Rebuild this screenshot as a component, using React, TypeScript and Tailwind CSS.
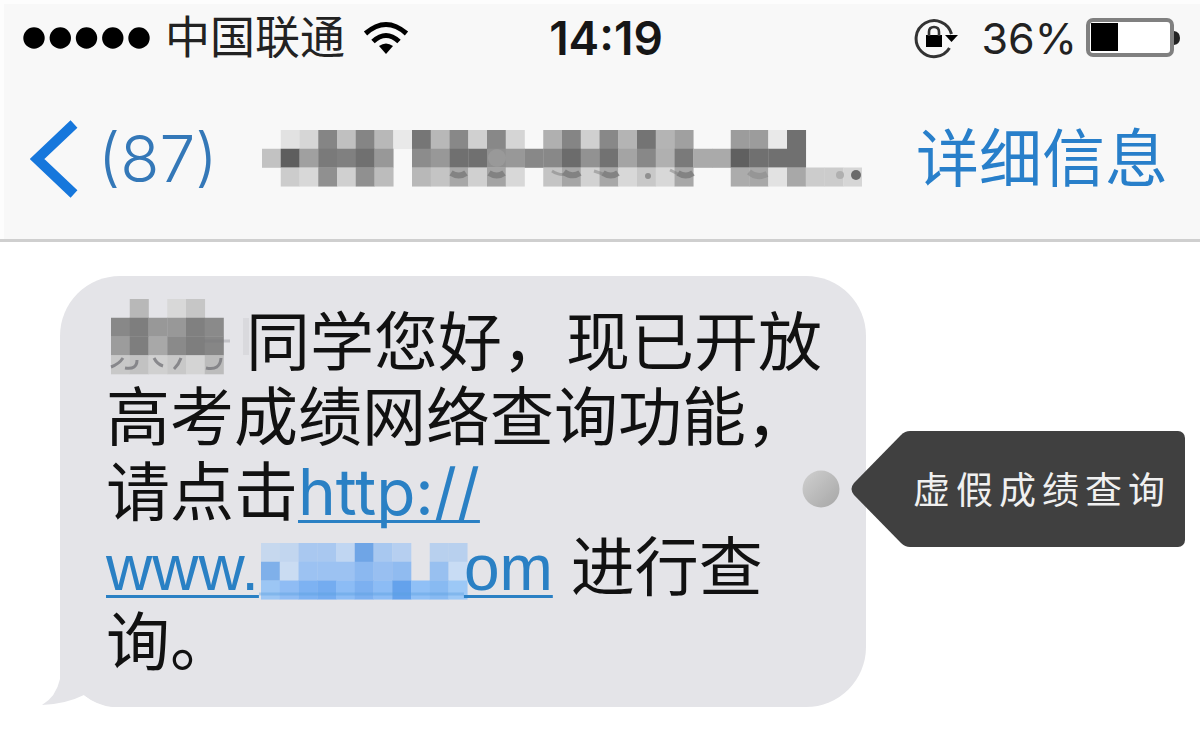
const TITLE_ROWS: string[] = [
  '. e2 d6 85 c0 85 b8 e9 76 b8 88 d0 88 d5 . b0 85 d0 88 b4 74 b4 a0 . . 9c 9c e9 70 . . .',
  'c2 5e a0 7a 80 70 98 . 8c 98 70 70 90 98 88 88 6c 92 72 a4 88 b0 7a aa aa 60 70 70 70 . . .',
  '. cc d8 90 d0 90 bc . b8 c4 a8 d0 a4 d8 . c4 a6 d2 a8 d8 c8 d8 a8 . . ac a8 e2 a8 cc cc d6',
];

const NAME_ROWS: string[] = [
  '. b8 . d8 c6 .',
  '88 7e 98 98 80 8a',
  '9c 7e a8 8a 7e 86',
  'c8 c2 d0 c8 d4 bc',
];

const LINK_ROWS: string[][] = [
  ['#c6d8ee', '#c2d6ef', '#a9c8f0', '#a9c8f0', '#c0d6f2', '#6fa5e6', '#a8c8f0', '#b6cff0', '', '#b8d0ee', '#b8d0ee'],
  ['#7fb0ea', '#cadcf2', '#9cc2f2', '#9cc2f2', '#9cc2f2', '#8bb8f0', '#98bff1', '#90bbf0', '', '#98c0f0', '#c8dcf4'],
  ['#9cc6f4', '#8fbcf4', '#7db2f2', '#74acf0', '#8cbcf5', '#7cb0f0', '#8cbcf5', '#64a2ec', '#90c0f6', '#88baf2', '#9cc8f6'],
];

const CELL = 75 / 4;

function cells(rows: string[]) {
  return rows.flatMap((row, y) =>
    row.split(' ').map((v, x) =>
      v === '.' ? null : (
        <rect key={`${x}-${y}`} x={x * CELL} y={y * CELL} width={CELL + 0.3} height={CELL + 0.3} fill={`#${v}${v}${v}`} />
      ),
    ),
  );
}

function TitleMosaic() {
  return (
    <svg width="600" height="57" viewBox="0 0 600 57" aria-label="contact" className="min-w-0">
      {cells(TITLE_ROWS)}
      <g fill="none" stroke="#777" strokeWidth="6" opacity=".75">
        <path d="M189 43q8 5 15 0M227 43q8 5 15 0M302 42q8 6 16 1M341 43q8 5 15 0M416 43q8 5 15 0" />
        <path d="M487 42q8 7 18 2" opacity=".5" />
        <path d="M290 41q8 5 14 3M332 41l12 4M408 40l10 5" strokeWidth="3" opacity=".6" />
      </g>
      <circle cx="235" cy="28" r="9" fill="#999" />
      <circle cx="386" cy="46" r="3" fill="#909090" />
      <circle cx="578" cy="45" r="4" fill="#b0b0b0" />
      <circle cx="594" cy="45" r="5" fill="#6a6a6a" />
    </svg>
  );
}

function NameMosaic() {
  return (
    <svg width="140" height="75" viewBox="0 0 140 75" aria-label="name" className="inline-block overflow-visible align-top">
      <rect x="137" y="14" width="6" height="37" fill="#d9d9dd" />
      <g transform="translate(5 -5)">{cells(NAME_ROWS)}</g>
      <g fill="none" stroke="#77777c" strokeWidth="3" opacity=".8">
        <path d="M5 63q8-3 12-9M19 64q12 2 12-8M48 54q3 6 9 8M68 65q5-5 7-11M100 64q14 3 15-10" />
      </g>
      <path d="M98 37h26" stroke="#77777c" strokeWidth="3" opacity=".3" />
    </svg>
  );
}

function LinkMosaic() {
  return (
    <svg width="205" height="75" viewBox="0 0 205 75" aria-label="domain" className="inline-block overflow-visible align-top">
      {LINK_ROWS.flatMap((row, y) =>
        row.map((fill, x) =>
          fill ? <rect key={`${x}-${y}`} x={2 + x * CELL} y={14 + y * CELL} width={CELL + 0.3} height={CELL + 0.3} fill={fill} /> : null,
        ),
      )}
      <path d="M0 65h205" stroke="#5aa0e0" strokeWidth="3" opacity=".4" />
    </svg>
  );
}

function StatusBar() {
  return (
    <div className="grid grid-cols-[1fr_auto_1fr] items-center pt-1 text-black">
      <div className="flex items-center pl-[23px]">
        <svg width="128" height="24" viewBox="0 0 128 24" aria-label="signal">
          {[11, 37.3, 63.5, 89.8, 116].map((x) => (
            <circle key={x} cx={x} cy="12" r="10.7" />
          ))}
        </svg>
        <span className="ml-[14px] text-[45px] leading-[68px] text-[#222]">中国联通</span>
        <svg width="46" height="36" viewBox="0 0 46 36" className="ml-[18px]" aria-label="Wi-Fi">
          <path d="M2.500 13.500Q23-4.500 43.500 13.500M10 21.500Q23 9.500 36 21.500" fill="none" stroke="#000" strokeWidth="5" />
          <path d="M16 26q7-5 14 0l-7 8z" />
        </svg>
      </div>
      <time className="pl-3 text-[46px] font-semibold leading-[68px] text-[#161616]">14:19</time>
      <div className="flex items-center justify-end pr-[20px]">
        <svg width="46" height="42" viewBox="0 0 46 42" aria-label="rotation lock">
          <path d="M35.500 31A18 18 0 1 1 37.500 17" fill="none" stroke="#333" strokeWidth="3" />
          <path d="M31 18h13l-6.500 7z" />
          <path d="M12 18h16v12H12z" />
          <path d="M15 19v-4q0-5 5-5t5 5v4" fill="none" stroke="#333" strokeWidth="2.600" />
        </svg>
        <span className="ml-[22px] text-[43px] leading-[68px] text-[#222]">36%</span>
        <svg width="94" height="40" viewBox="0 0 94 40" className="ml-[9px]" aria-label="battery">
          <rect x="2" y="2" width="84" height="35" rx="5" fill="#fff" stroke="#808080" strokeWidth="4" />
          <path d="M5 5h27v28H5z" />
          <path d="M88 13q6 1 6 7t-6 7z" fill="#222" />
        </svg>
      </div>
    </div>
  );
}

export default function App() {
  return (
    <div className="relative min-h-screen bg-white font-[Inter,'Noto_Sans_CJK_SC',sans-serif]">
      <header className="border-b-[3px] border-[#cfcfcf] bg-[#f8f8f8] shadow-[inset_4px_4px_0_#fdfdfd]">
        <StatusBar />
        <nav className="flex h-[167px] items-center pl-[30px] pr-[32px] pt-[6px]">
          <button type="button" className="flex items-center text-[#3478b8]">
            <svg width="48" height="78" viewBox="0 0 48 78" aria-hidden="true">
              <path d="M44 4L7 39l37 35" fill="none" stroke="#1677dc" strokeWidth="10" />
            </svg>
            <span className="ml-[20px] text-[64px] font-light leading-[75px]">(87)</span>
          </button>
          <h1 className="ml-auto mr-[10px]">
            <TitleMosaic />
          </h1>
          <button type="button" className="ml-auto whitespace-nowrap text-[63px] leading-[75px] text-[#287fca]">
            详细信息
          </button>
        </nav>
      </header>

      <main className="relative pl-[60px] pt-[34px]">
        <div className="relative w-full max-w-[806px] rounded-[60px] bg-[#e4e4e8] px-[46px] py-[28px]">
          <svg width="100" height="90" viewBox="0 0 100 90" className="absolute -left-[20px] bottom-0" aria-hidden="true">
            <path d="M20 0V62Q16 80 2 88Q26 87 44 78Q56 88 72 90H100V0z" fill="#e4e4e8" />
          </svg>
          <p className="relative whitespace-nowrap text-[64px] leading-[75px] text-[#111]">
            <NameMosaic />
            同学您好，现已开放
            <br />
            高考成绩网络查询功能，
            <br />
            请点击
            <a
              href="#"
              className="text-[#2a80c4] underline decoration-[3px] underline-offset-[5px] [text-decoration-skip-ink:none]"
            >
              http://
              <br />
              <span className="font-['Liberation_Sans',sans-serif] leading-none">www.</span>
              <LinkMosaic />
              <span className="font-['Liberation_Sans',sans-serif] leading-none">om</span>
            </a>{' '}
            进行查
            <br />
            询。
          </p>
        </div>
        <aside className="absolute right-[15px] top-[188px] flex items-center">
          <svg width="38" height="38" viewBox="0 0 38 38" className="mr-[11px]" aria-hidden="true">
            <defs>
              <linearGradient id="dot" x1="0" y1="0" x2="1" y2="1">
                <stop offset="0" stopColor="#d0d0d0" />
                <stop offset="1" stopColor="#a6a6a6" />
              </linearGradient>
            </defs>
            <circle cx="19" cy="19" r="18.500" fill="url(#dot)" />
          </svg>
          <svg width="60" height="118" viewBox="0 0 60 118" aria-hidden="true">
            <path d="M61 1H59Q54 1 50 5L3 53Q-2 59 3 65L50 113Q54 117 59 117H61z" fill="#404040" />
          </svg>
          <span className="flex h-[116px] items-center rounded-r-[7px] bg-[#404040] pl-[2px] pr-[14px] pt-[4px] text-[37px] tracking-[6px] text-[#f0f0f0]">
            虚假成绩查询
          </span>
        </aside>
      </main>
    </div>
  );
}
